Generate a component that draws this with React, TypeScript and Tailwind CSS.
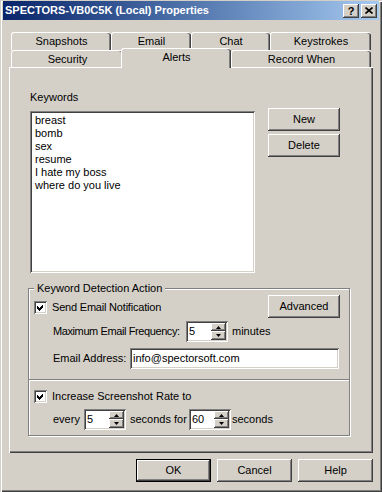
import React from "react";

const raised = "shadow-[inset_-1px_-1px_#404040,inset_1px_1px_#ffffff,inset_-2px_-2px_#808080]";
const sunken = "shadow-[inset_1px_1px_#808080,inset_-1px_-1px_#ffffff,inset_2px_2px_#404040,inset_-2px_-2px_#d4d0c8]";

const keywords = ["breast", "bomb", "sex", "resume", "I hate my boss", "where do you live"];

function Button({ label, wide, primary }: { label: string; wide?: boolean; primary?: boolean }) {
  return (
    <div
      className={`flex h-[23px] items-center justify-center bg-[#d4d0c8] leading-[13px] ${wide ? "w-[75px]" : "w-[72px]"} ${primary ? "border border-black" : ""} ${raised}`}
    >
      {label}
    </div>
  );
}

function Check() {
  return (
    <div className={`flex h-[13px] w-[13px] shrink-0 items-center justify-center bg-white ${sunken}`}>
      <svg width="7" height="7" viewBox="0 0 7 7" shapeRendering="crispEdges">
        <path d="M0 2L2 4L6 0V3L2 7L0 5Z" fill="#000" />
      </svg>
    </div>
  );
}

function Spin({ value }: { value: string }) {
  return (
    <div className={`flex h-[21px] w-[42px] shrink-0 bg-white p-[2px] ${sunken}`}>
      <span className="flex-1 pl-[1px] leading-[17px]">{value}</span>
      <div className="flex w-[15px] flex-col">
        <div className={`flex h-[8px] items-center justify-center bg-[#d4d0c8] ${raised}`}>
          <svg width="5" height="3" viewBox="0 0 5 3">
            <path d="M2.5 0L5 3H0Z" fill="#000" />
          </svg>
        </div>
        <div className={`flex h-[9px] items-center justify-center bg-[#d4d0c8] ${raised}`}>
          <svg width="5" height="3" viewBox="0 0 5 3">
            <path d="M0 0H5L2.5 3Z" fill="#000" />
          </svg>
        </div>
      </div>
    </div>
  );
}

function Tab({ label, w, selected }: { label: string; w: string; selected?: boolean }) {
  return (
    <div
      className={`flex items-center justify-center rounded-t-[3px] border-l border-t border-white bg-[#d4d0c8] shadow-[inset_-1px_0_#404040,inset_-2px_0_#808080] ${w} ${
        selected ? "relative z-10 -mb-[1px] -ml-[2px] h-[20px] pb-[2px]" : "h-full"
      }`}
    >
      {label}
    </div>
  );
}

export default function App() {
  return (
    <div className="h-[492px] w-[382px] bg-[#d4d0c8] px-[3px] pt-[1px] font-['Liberation_Sans',Arial,sans-serif] text-[11px] text-black shadow-[inset_1px_1px_#d4d0c8,inset_2px_2px_#ffffff,inset_-1px_-1px_#404040,inset_-2px_-2px_#808080]">
      {/* caption */}
      <div className="flex h-[19px] items-center justify-between bg-gradient-to-r from-[#0a246a] to-[#a6caf0] pl-[2px] pr-[2px]">
        <span className="font-bold text-white">SPECTORS-VB0C5K (Local) Properties</span>
        <div className="flex gap-[2px]">
          <div className={`flex h-[14px] w-[16px] items-center justify-center bg-[#d4d0c8] text-[11px] font-bold leading-[14px] ${raised}`}>
            ?
          </div>
          <div className={`flex h-[14px] w-[16px] items-center justify-center bg-[#d4d0c8] ${raised}`}>
            <svg width="8" height="7" viewBox="0 0 8 7">
              <path d="M0.5 0.5L7.5 6.5M7.5 0.5L0.5 6.5" stroke="#000" strokeWidth="1.6" />
            </svg>
          </div>
        </div>
      </div>

      <div className="px-[6px] pt-[12px]">
        {/* tabs */}
        <div className="ml-[2px]">
          <div className="flex h-[18px]">
            <Tab label="Snapshots" w="w-[100px]" />
            <Tab label="Email" w="w-[80px]" />
            <Tab label="Chat" w="w-[79px]" />
            <Tab label="Keystrokes" w="w-[101px]" />
          </div>
          <div className="flex h-[17px] items-end">
            <Tab label="Security" w="w-[112px]" />
            <Tab label="Alerts" w="w-[110px]" selected />
            <Tab label="Record When" w="w-[140px]" />
          </div>
        </div>

        {/* page */}
        <div className="h-[386px] w-[364px] bg-[#d4d0c8] pl-[19px] pt-[24px] shadow-[inset_1px_1px_#ffffff,inset_-1px_-1px_#404040,inset_-2px_-2px_#808080]">
          <div className="ml-[2px] leading-[13px]">Keywords</div>
          <div className="ml-[2px] mt-[4px] flex items-start">
            <div className={`mt-[3px] h-[162px] w-[225px] bg-white pl-[5px] pt-[3px] leading-[13px] ${sunken}`}>
              {keywords.map((k) => (
                <div key={k}>{k}</div>
              ))}
            </div>
            <div className="ml-[13px] flex flex-col gap-[3px]">
              <Button label="New" />
              <Button label="Delete" />
            </div>
          </div>

          {/* Keyword Detection Action */}
          <div className="relative mt-[15px] w-[322px] border border-[#808080] pb-[5px] pl-[5px] pr-[9px] pt-[6px] shadow-[1px_1px_0_#ffffff,inset_1px_1px_0_#ffffff]">
            <span className="absolute -top-[7px] left-[5px] bg-[#d4d0c8] px-[3px] leading-[13px]">Keyword Detection Action</span>
            <div className="flex items-start justify-between">
              <div className="mt-[6px] flex items-center gap-[5px] whitespace-nowrap leading-[13px] tracking-[-0.2px]">
                <Check />
                <span>Send Email Notification</span>
              </div>
              <Button label="Advanced" />
            </div>
            <div className="mt-[3px] flex items-center whitespace-nowrap pl-[19px]">
              <span className="w-[133px] shrink-0 tracking-[-0.4px]">Maximum Email Frequency:</span>
              <Spin value="5" />
              <span className="ml-[4px]">minutes</span>
            </div>
            <div className="mt-[6px] flex items-center whitespace-nowrap pl-[19px]">
              <span className="w-[77px] shrink-0">Email Address:</span>
              <div className={`h-[21px] w-[209px] bg-white pl-[3px] leading-[21px] ${sunken}`}>info@spectorsoft.com</div>
            </div>
            <div className="-ml-[5px] -mr-[9px] mt-[10px] h-[2px] border-b border-t border-b-white border-t-[#808080]" />
            <div className="mt-[9px] flex items-center gap-[5px] whitespace-nowrap leading-[13px]">
              <Check />
              <span>Increase Screenshot Rate to</span>
            </div>
            <div className="mt-[6px] flex items-center whitespace-nowrap pl-[19px]">
              <span className="w-[31px] shrink-0">every</span>
              <Spin value="5" />
              <span className="w-[63px] shrink-0 pl-[4px]">seconds for</span>
              <Spin value="60" />
              <span className="pl-[1px]">seconds</span>
            </div>
          </div>
        </div>

        {/* dialog buttons */}
        <div className="mt-[6px] flex w-[364px] justify-end gap-[6px]">
          <Button label="OK" wide primary />
          <Button label="Cancel" wide />
          <Button label="Help" wide />
        </div>
      </div>
    </div>
  );
}
